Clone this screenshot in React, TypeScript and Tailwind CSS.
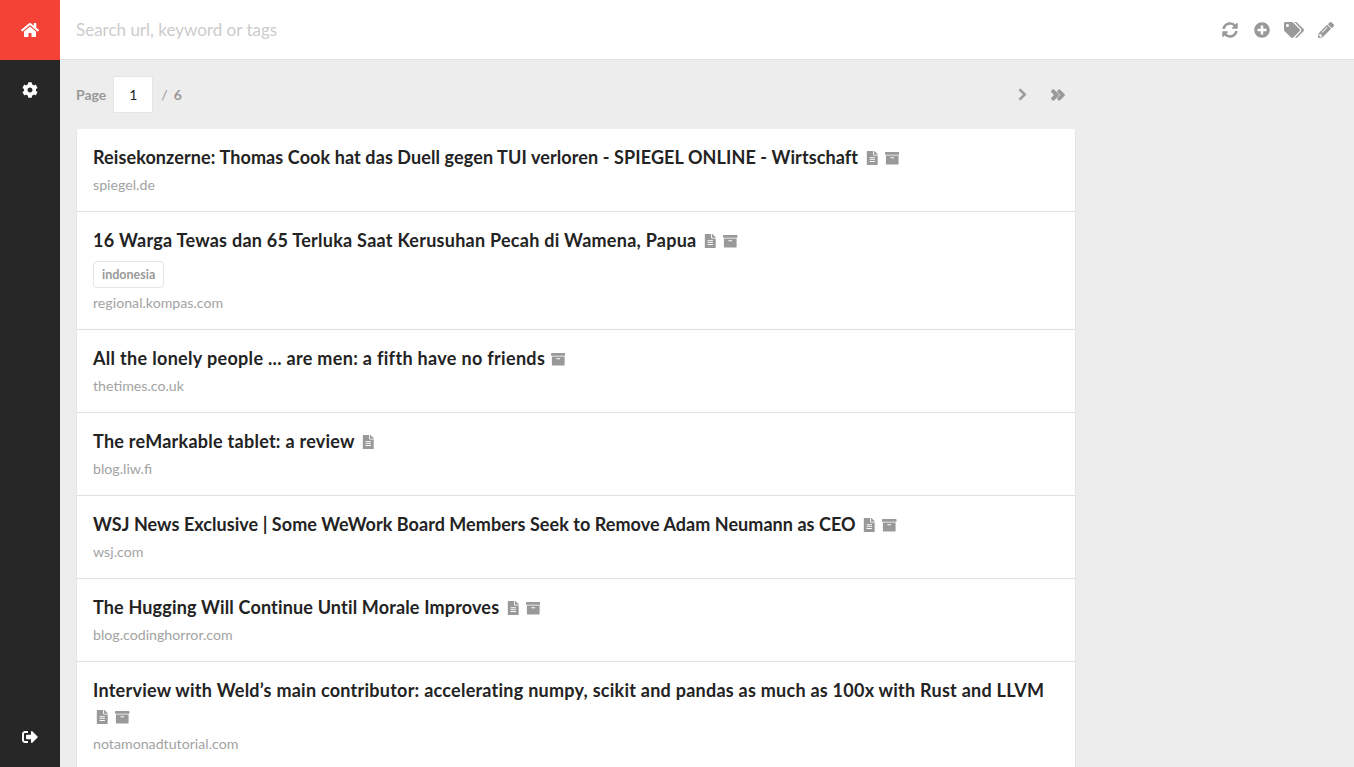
import React from "react";
import {
  FaHome,
  FaCog,
  FaSignOutAlt,
  FaSyncAlt,
  FaPlusCircle,
  FaTags,
  FaPencilAlt,
  FaChevronRight,
  FaAngleDoubleRight,
  FaFileAlt,
  FaArchive,
} from "react-icons/fa";

const items = [
  { title: "Reisekonzerne: Thomas Cook hat das Duell gegen TUI verloren - SPIEGEL ONLINE - Wirtschaft", track: "tracking-[0.1px]", domain: "spiegel.de", doc: true, box: true },
  { title: "16 Warga Tewas dan 65 Terluka Saat Kerusuhan Pecah di Wamena, Papua", track: "tracking-[0.26px]", domain: "regional.kompas.com", doc: true, box: true, tag: "indonesia" },
  { title: "All the lonely people ... are men: a fifth have no friends", track: "tracking-[0.32px]", domain: "thetimes.co.uk", box: true },
  { title: "The reMarkable tablet: a review", track: "tracking-[0.26px]", domain: "blog.liw.fi", doc: true },
  { title: "WSJ News Exclusive | Some WeWork Board Members Seek to Remove Adam Neumann as CEO", track: "tracking-[0.05px]", domain: "wsj.com", doc: true, box: true },
  { title: "The Hugging Will Continue Until Morale Improves", track: "tracking-[0.16px]", domain: "blog.codinghorror.com", doc: true, box: true },
  { title: "Interview with Weld’s main contributor: accelerating numpy, scikit and pandas as much as 100x with Rust and LLVM", track: "tracking-[0.25px]", domain: "notamonadtutorial.com", doc: true, box: true },
];

const App = () => {
  return (
    <div className="flex h-[767px] overflow-hidden bg-[#ededed] font-['Lato','Noto_Sans',sans-serif] text-[#232323]">
      <div className="flex w-[60px] shrink-0 flex-col bg-[#272727] text-white">
        <div className="flex h-[60px] items-center justify-center bg-[#f44336] text-[18px]">
          <FaHome />
        </div>
        <div className="flex h-[60px] items-center justify-center text-[16px]">
          <FaCog />
        </div>
        <div className="mt-auto flex h-[60px] items-center justify-center text-[16px]">
          <FaSignOutAlt />
        </div>
      </div>
      <div className="flex min-w-0 flex-1 flex-col">
        <div className="flex h-[60px] shrink-0 items-center justify-between border-b border-[#e0e0e0] bg-white pl-4 pr-3">
          <span className="text-[17px] text-[#cccccc]">Search url, keyword or tags</span>
          <div className="flex items-center text-[16px] text-[#999999]">
            <span className="flex w-8 justify-center"><FaSyncAlt /></span>
            <span className="flex w-8 justify-center"><FaPlusCircle /></span>
            <span className="flex w-8 justify-center"><FaTags className="text-[20px]" /></span>
            <span className="flex w-8 justify-center"><FaPencilAlt /></span>
          </div>
        </div>
        <div className="w-[1032px] pl-4 pr-4">
          <div className="flex h-[69px] items-center text-[14px] text-[#999999]">
            <span className="font-bold">Page</span>
            <span className="ml-[7px] flex h-[37px] w-10 items-center justify-center border border-[#e5e5e5] bg-white text-[#232323]">1</span>
            <span className="ml-2">/</span>
            <span className="ml-[6px] font-bold">6</span>
            <span className="ml-auto flex items-center gap-[21px] pr-[10px]">
              <FaChevronRight className="text-[13px]" stroke="currentColor" strokeWidth={30} />
              <FaAngleDoubleRight className="text-[16px]" stroke="currentColor" strokeWidth={40} />
            </span>
          </div>
          <div className="border-x border-b border-[#e5e5e5] bg-white">
            {items.map((item) => (
              <div key={item.title} className="border-b border-[#e0e0e0] px-4 pb-[14px] pt-[15px] last:border-b-0">
                <div className={`text-[18px] font-bold leading-[26px] ${item.track}`}>
                  <span>{item.title}</span>{" "}
                  {item.doc && <FaFileAlt className="ml-0.5 inline align-[-1px] text-[14.5px] text-[#999999]" />}{" "}
                  {item.box && <FaArchive className="ml-px inline align-[-1px] text-[14.5px] text-[#999999]" />}
                </div>
                {item.tag && (
                  <span className="mb-px mt-2 block h-[27px] w-fit rounded-[4px] border border-[#e5e5e5] px-2 text-[12.5px] font-bold leading-[25px] text-[#999999]">
                    {item.tag}
                  </span>
                )}
                <div className="mt-[3px] text-[14.2px] leading-[24px] text-[#a3a3a3]">{item.domain}</div>
              </div>
            ))}
          </div>
        </div>
      </div>
    </div>
  );
};

export default App;
